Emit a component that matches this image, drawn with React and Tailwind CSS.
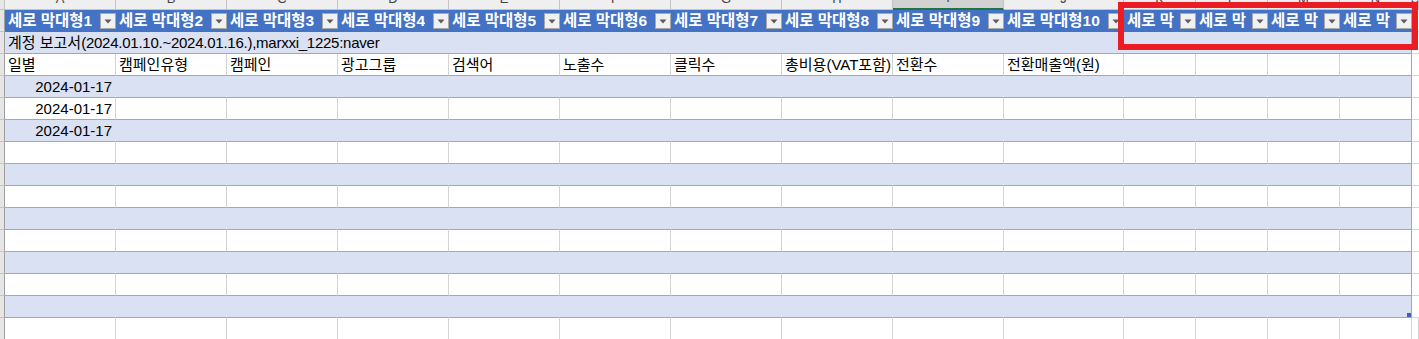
import React from 'react'

const GRID = 'grid grid-cols-[5px_repeat(9,111px)_120px_repeat(4,72px)_1fr]'

const headers = [
    '세로 막대형1', '세로 막대형2', '세로 막대형3', '세로 막대형4', '세로 막대형5',
    '세로 막대형6', '세로 막대형7', '세로 막대형8', '세로 막대형9', '세로 막대형10',
    '세로 막', '세로 막', '세로 막', '세로 막',
]

const labels = [
    '일별', '캠페인유형', '캠페인', '광고그룹', '검색어', '노출수', '클릭수',
    '총비용(VAT포함)', '전환수', '전환매출액(원)', '', '', '', '',
]

const letters = ['A', 'B', 'C', 'D', 'E', 'F', 'G', 'H', 'I', 'J', 'K', 'L', 'M', 'N', 'O']

const dates = ['2024-01-17', '2024-01-17', '2024-01-17', '', '', '', '', '', '', '', '']

const FilterButton = () => (
    <div className="w-[16px] h-[16px] shrink-0 box-border border border-[#a9a9a9] bg-[#f1f1f1] flex items-center justify-center">
        <svg width="8" height="5" viewBox="0 0 8 5">
            <path d="M0.5 0.5h7L4 4.5z" fill="#5c5c5c" />
        </svg>
    </div>
)

const RowHead = () => (
    <div className="h-full box-border bg-[#e6e6e6] border-r border-b border-r-[#9f9f9f] border-b-[#c4c4c4]" />
)

const App = () => {
    return (
        <div className="relative w-[1419px] h-[339px] overflow-hidden bg-white font-['Liberation_Sans','Noto_Sans_CJK_KR',sans-serif] text-[15px] text-black">
            {/* column letters strip */}
            <div className={`${GRID} h-[10px]`}>
                <div className="h-full box-border bg-[#e6e6e6] border-r border-b border-[#c4c4c4]" />
                {letters.map((l, i) => (
                    <div
                        key={l}
                        className={
                            i === 8
                                ? 'h-full box-border overflow-hidden flex items-end justify-center bg-[#d2d2d2] border-r border-[#c4c4c4] border-b-2 border-b-[#217346]'
                                : 'h-full box-border overflow-hidden flex items-end justify-center bg-[#efefef] border-r border-b border-[#c4c4c4]'
                        }
                    >
                        <span className="text-[13px] leading-none text-[#444] mb-[4px]">{l}</span>
                    </div>
                ))}
            </div>

            {/* header row */}
            <div className={`${GRID} h-[22px]`}>
                <RowHead />
                {headers.map((h, i) => (
                    <div key={i} className="h-full bg-[#4472c4] flex items-center justify-between pl-[3px] overflow-hidden">
                        <span className="text-white text-[15.5px] font-bold whitespace-nowrap overflow-hidden leading-[20px]">{h}</span>
                        <FilterButton />
                    </div>
                ))}
                <div className="h-full box-border bg-white border-b border-[#d4d4d4]" />
            </div>

            {/* title row */}
            <div className={`${GRID} h-[22px]`}>
                <RowHead />
                <div className="col-span-14 h-full box-border bg-[#d9e1f2] border-r border-b border-[#8ea9db] flex items-center pl-[3px]">
                    <span className="whitespace-nowrap leading-[20px]">
                        계정 보고서<span className="tracking-[-0.25px]">(2024.01.10.~2024.01.16.),marxxi_1225:naver</span>
                    </span>
                </div>
                <div className="h-full box-border bg-white border-b border-[#d4d4d4]" />
            </div>

            {/* label row */}
            <div className={`${GRID} h-[22px]`}>
                <RowHead />
                {labels.map((l, i) => (
                    <div
                        key={i}
                        className={
                            i === 13
                                ? 'h-full box-border bg-white border-r border-b border-[#8ea9db] flex items-center pl-[3px] overflow-hidden'
                                : 'h-full box-border bg-white border-r border-r-[#d4d4d4] border-b border-b-[#8ea9db] flex items-center pl-[3px] overflow-hidden'
                        }
                    >
                        <span className="whitespace-nowrap leading-[20px]">{l}</span>
                    </div>
                ))}
                <div className="h-full box-border bg-white border-b border-[#d4d4d4]" />
            </div>

            {/* data rows */}
            {dates.map((d, r) => {
                const band = r % 2 === 0
                return (
                    <div key={r} className={`${GRID} h-[22px]`}>
                        <RowHead />
                        {labels.map((_, i) => (
                            <div
                                key={i}
                                className={
                                    i === 13
                                        ? band
                                            ? 'relative h-full box-border bg-[#d9e1f2] border-r border-b border-[#8ea9db]'
                                            : 'h-full box-border bg-white border-r border-b border-[#8ea9db]'
                                        : band
                                            ? 'h-full box-border bg-[#d9e1f2] border-r border-r-[#d9e1f2] border-b border-b-[#8ea9db] flex items-center justify-end pr-[3px]'
                                            : 'h-full box-border bg-white border-r border-r-[#d4d4d4] border-b border-b-[#8ea9db] flex items-center justify-end pr-[3px]'
                                }
                            >
                                {i === 0 && d && <span className="whitespace-nowrap leading-[20px]">{d}</span>}
                                {i === 13 && r === dates.length - 1 && (
                                    <div className="absolute right-0 bottom-0 w-[4px] h-[4px] bg-[#3f5fbf]" />
                                )}
                            </div>
                        ))}
                        <div className="h-full box-border bg-white border-b border-[#d4d4d4]" />
                    </div>
                )
            })}

            {/* row below table */}
            <div className={`${GRID} h-[22px]`}>
                <RowHead />
                {letters.map((l) => (
                    <div key={l} className="h-full box-border bg-white border-r border-b border-[#d4d4d4]" />
                ))}
            </div>

            {/* red annotation box */}
            <div className="absolute left-[1118px] top-[2px] w-[300px] h-[48px] border-[6px] border-[#ec1c24]" />
        </div>
    )
}

export default App
